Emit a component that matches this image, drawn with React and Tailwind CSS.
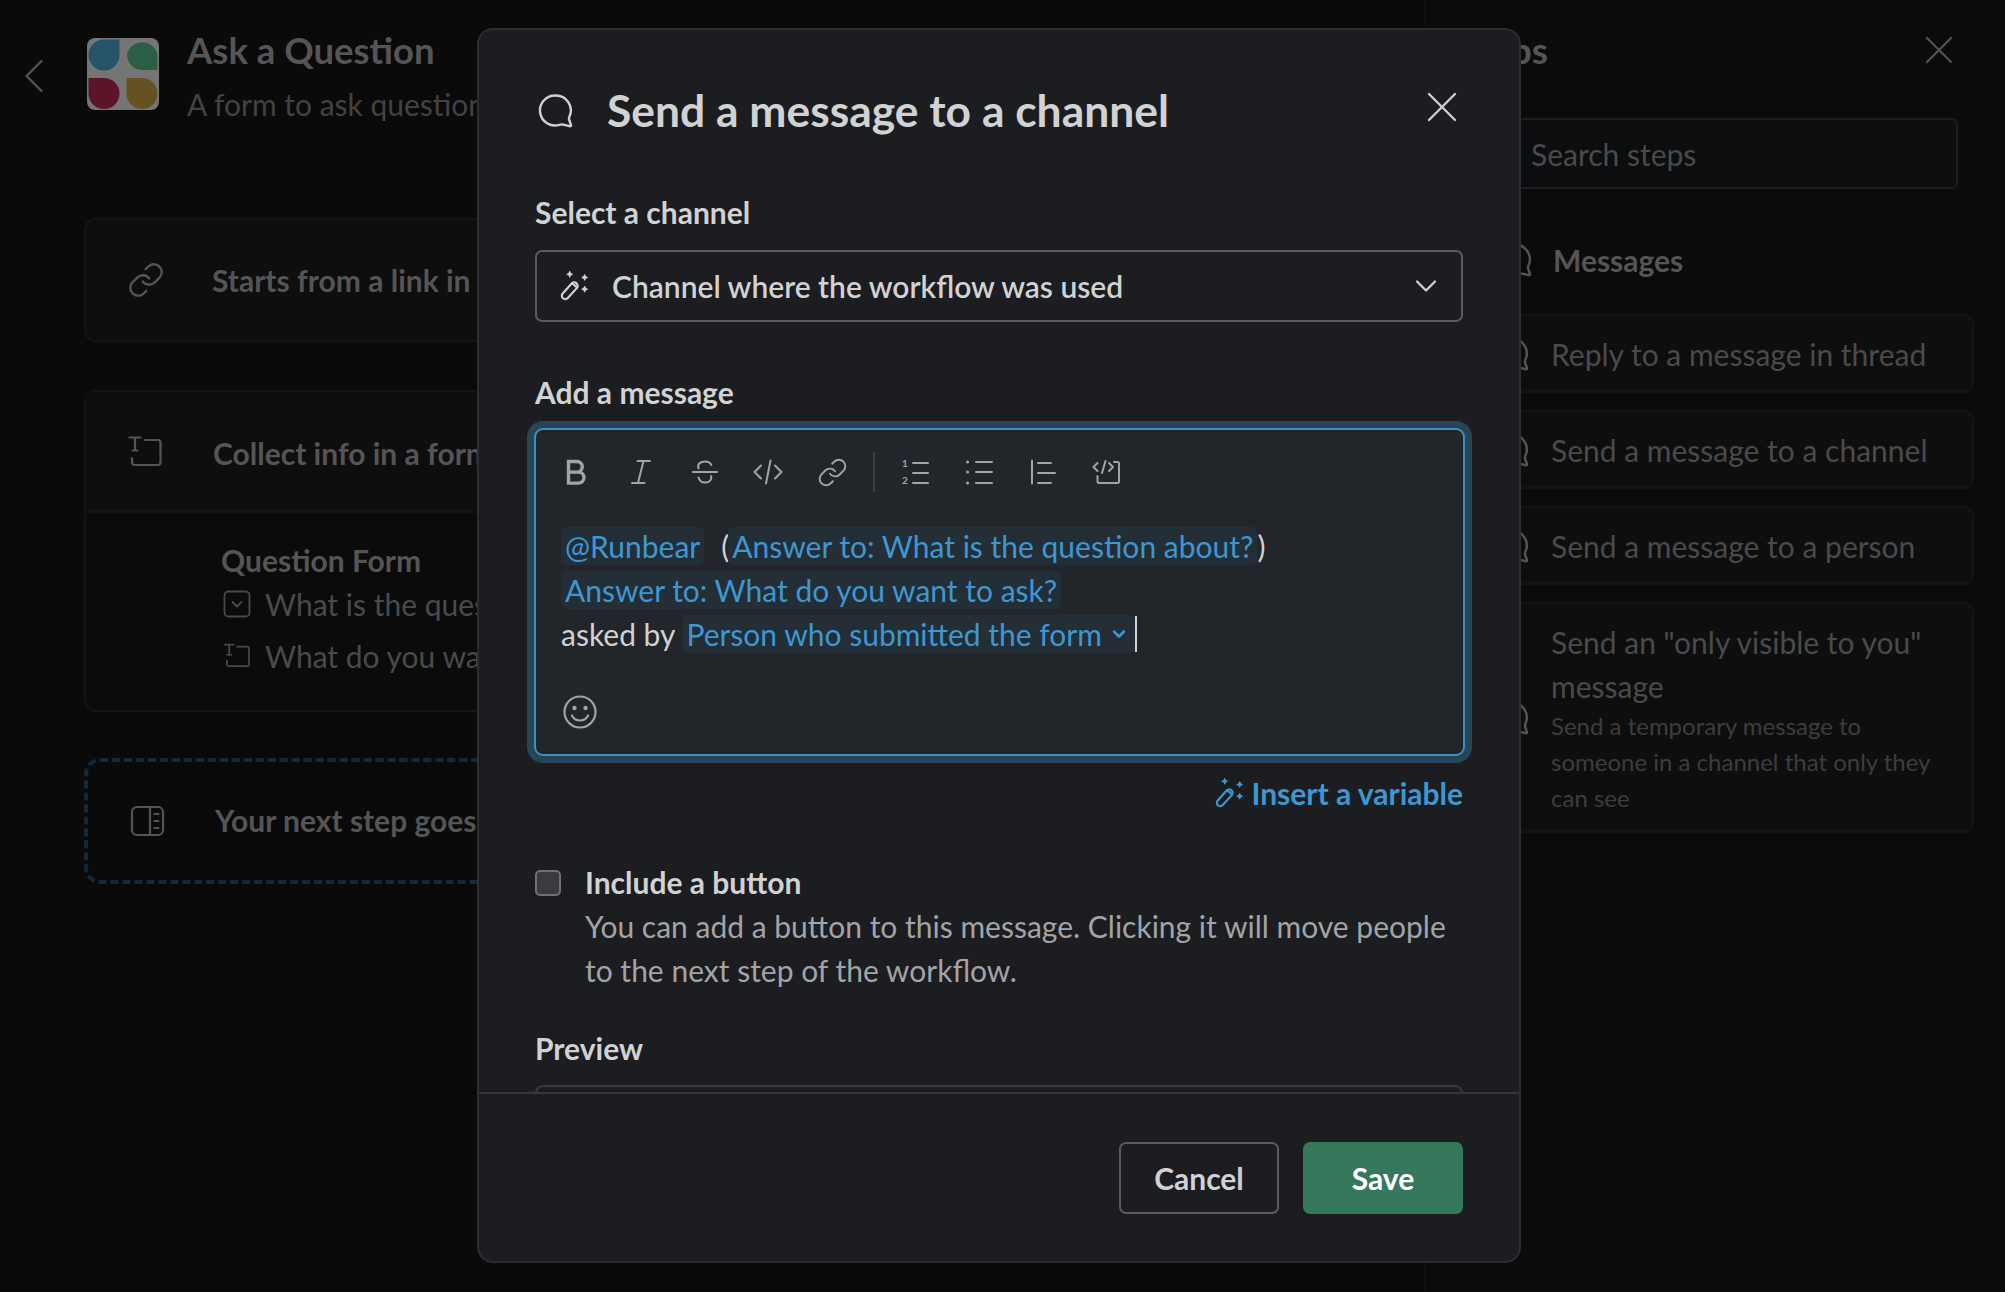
import { Link, X, ChevronLeft, ChevronDown } from 'lucide-react'

// ── Icons ────────────────────────────────────────────────────────────
const Svg = ({ size = 36, className = '', children, box = 36, strokeWidth = '2' }) => (
  <svg
    width={size}
    height={size}
    viewBox={`0 0 ${box} ${box}`}
    fill="none"
    stroke="currentColor"
    strokeLinecap="round"
    strokeLinejoin="round"
    strokeWidth={strokeWidth}
    className={`shrink-0 ${className}`}
  >
    {children}
  </svg>
)

const Bubble = ({ size = 36, className = '' }) => (
  <Svg size={size} className={className} strokeWidth="2.400">
    <path d="M17 2.500a15 15 0 1 0 4.500 29.300c1.200-.4 2.500-.5 3.700-.2l6.500 1.600c1 .2 1.500-.4 1.200-1.300l-1.800-5.400c-.3-.9-.2-1.700.2-2.500A15 15 0 0 0 17 2.500z" />
  </Svg>
)

const Wand = ({ size = 32, className = '' }) => (
  <Svg size={size} box={30} className={className} strokeWidth="2">
    <rect x="-9.500" y="-3.200" width="19" height="6.400" rx="3.200" transform="translate(11 19.500) rotate(-48)" />
    <path d="M13.500 12.500l4.500 4" />
    <path d="M11 1.500l.8 1.700 1.700.8-1.700.8-.8 1.700-.8-1.700-1.700-.8 1.700-.8z" fill="currentColor" strokeWidth="1" />
    <path d="M25 4.500l.8 1.700 1.700.8-1.700.8-.8 1.700-.8-1.700-1.700-.8 1.700-.8z" fill="currentColor" strokeWidth="1" />
    <path d="M25 15.500l.8 1.700 1.700.8-1.700.8-.8 1.700-.8-1.700-1.700-.8 1.700-.8z" fill="currentColor" strokeWidth="1" />
  </Svg>
)

const TextBox = ({ size = 36, className = '' }) => (
  <Svg size={size} className={className} strokeWidth="2.200">
    <path d="M18 6h13a2.500 2.500 0 0 1 2.500 2.500v20a2.500 2.500 0 0 1-2.500 2.500H7.500A2.500 2.500 0 0 1 5 28.500V24" />
    <path d="M2.500 3.500h11M8 3.500v13M5.500 16.500h5" />
  </Svg>
)

const SelectBox = ({ size = 28, className = '' }) => (
  <Svg size={size} box={28} className={className} strokeWidth="1.800">
    <rect x="1.500" y="1.500" width="25" height="25" rx="4" />
    <path d="M9.500 12l4.500 4.500 4.500-4.500" />
  </Svg>
)

const Panel = ({ className = '' }) => (
  <Svg size={36} className={className} strokeWidth="2.200">
    <rect x="2" y="4" width="31" height="28" rx="5" />
    <path d="M20 4v28M24.500 11h4M24.500 18h4M24.500 25h4" />
  </Svg>
)

const LogoTile = () => (
  <svg width="72" height="72" viewBox="0 0 72 72" className="shrink-0">
    <rect width="72" height="72" rx="8" fill="#757575" />
    <path d="M1.500 17A15.500 15.500 0 0 1 17 1.500H32.500V17A15.500 15.500 0 0 1 1.500 17z" fill="#27536a" />
    <path d="M40 17A15.500 15.500 0 0 1 70.500 17V32H55.500A15.500 15.500 0 0 1 40 17z" fill="#2a5f44" />
    <path d="M1.500 40H17a15.500 15.500 0 1 1-15.500 15.500z" fill="#5a1529" />
    <path d="M70.500 55.500a15.500 15.500 0 1 1-31 0V40h15.500a15.500 15.500 0 0 1 15.500 15.500z" fill="#645220" />
  </svg>
)

// ── Toolbar ──────────────────────────────────────────────────────────
const ToolBtn = ({ children }) => (
  <div className="flex h-[64px] w-[64px] items-center justify-center text-[#a3a4a6]">{children}</div>
)

const Toolbar = () => (
  <div className="flex items-center">
    <ToolBtn>
      <Svg>
        <path d="M10.500 7.500h8.500a5.300 5.300 0 0 1 0 10.600h-8.500zM10.500 18.100H20.500a5.500 5.500 0 0 1 0 11h-10z" strokeWidth="3.400" strokeLinecap="butt" strokeLinejoin="miter" />
      </Svg>
    </ToolBtn>
    <ToolBtn>
      <Svg>
        <path d="M15.500 7H28M10 29h12.500M21.500 7l-5.500 22" />
      </Svg>
    </ToolBtn>
    <ToolBtn>
      <Svg>
        <path d="M7 18h24" />
        <path d="M12.500 14.500C11 10 14.500 7.500 19 7.500c3 0 5.300 1 6.200 3.500" />
        <path d="M12.500 23.500c.8 3.200 3.300 5 6.500 5 3.600 0 6.300-2 6.300-5 0-.5-.1-1-.2-1.500" />
      </Svg>
    </ToolBtn>
    <ToolBtn>
      <Svg>
        <path d="M11 11.500L4.500 18l6.500 6.500M25 11.500l6.500 6.500-6.500 6.500M20.500 6.500l-4.500 23" />
      </Svg>
    </ToolBtn>
    <ToolBtn>
      <Link size={31} strokeWidth={1.500} />
    </ToolBtn>
    <div className="mr-[8px] ml-[9px] h-[40px] w-[2px] bg-[#3c3e42]" />
    <ToolBtn>
      <Svg>
        <path d="M16 9h15M16 19h15M16 29h15" />
        <text x="5" y="13" fontSize="10" fontWeight="700" fill="currentColor" stroke="none" fontFamily="Lato, sans-serif">1</text>
        <text x="5" y="30" fontSize="10" fontWeight="700" fill="currentColor" stroke="none" fontFamily="Lato, sans-serif">2</text>
      </Svg>
    </ToolBtn>
    <ToolBtn>
      <Svg>
        <path d="M15 8h16M15 18h16M15 29h16" />
        <path d="M6.500 8h.1M6.500 18h.1M6.500 29h.1" strokeWidth="3" />
      </Svg>
    </ToolBtn>
    <ToolBtn>
      <Svg>
        <path d="M7 6.500v23M13 9h13M13 19h17M13 29h13" />
      </Svg>
    </ToolBtn>
    <ToolBtn>
      <Svg>
        <path d="M25 8h3.500A1.500 1.500 0 0 1 30 9.500v18a1.500 1.500 0 0 1-1.500 1.500H10A1.500 1.500 0 0 1 8.500 27.500V22" />
        <path d="M8.500 9L4.500 13l4 4M20 9l4 4-4 4M16.500 7l-3.500 12" />
      </Svg>
    </ToolBtn>
  </div>
)

const Chip = ({ className = '', children }) => (
  <span className={`inline-flex h-[38px] items-center rounded-[5px] bg-[#232e37] px-[4px] text-[#3f97d1] ${className}`}>{children}</span>
)

// ── Background: workflow editor ──────────────────────────────────────
const WorkflowPane = () => (
  <div className="relative w-[1425px] shrink-0 overflow-hidden border-r border-[#111112] bg-[#0a0a0b]">
    <div className="flex h-[218px] items-start pt-[38px]">
      <div className="flex h-[72px] w-[87px] items-center pl-[4px] text-[#555556]">
        <ChevronLeft size={60} strokeWidth={0.900} className="translate-y-[2px]" />
      </div>
      <LogoTile />
      <div className="ml-[28px] -mt-[2px]">
        <div className="text-[36.500px] leading-[28px] font-bold text-[#555556]">Ask a Question</div>
        <div className="mt-[20px] text-[30px] leading-[40px] text-[#424243]">A form to ask questions</div>
      </div>
    </div>

    <div className="ml-[84px] w-[1200px]">
      <div className="flex h-[124px] items-center rounded-[12px] border-2 border-[#141415] bg-[#0e0e0f] pl-[41px] text-[#555556]">
        <Link size={38} strokeWidth={1.500} />
        <span className="ml-[47px] text-[30px] font-bold">Starts from a link in Slack</span>
      </div>

      <div className="mt-[48px] h-[322px] rounded-[12px] border-2 border-[#141415] bg-[#0b0b0c]">
        <div className="flex h-[121px] items-center border-b-2 border-[#141415] bg-[#0e0e0f] pl-[41px] text-[#555556]">
          <TextBox />
          <span className="ml-[50px] translate-y-[2px] text-[30px] font-bold">Collect info in a form</span>
        </div>
        <div className="pt-[27px] pl-[135px]">
          <div className="text-[30px] leading-[40px] font-bold text-[#555556]">Question Form</div>
          <div className="mt-[2px] flex h-[44px] items-center text-[30px] text-[#4a4a4b]">
            <SelectBox className="ml-[2px]" />
            <span className="ml-[14px]">What is the question about?</span>
          </div>
          <div className="mt-[8px] flex h-[44px] items-center text-[30px] text-[#4a4a4b]">
            <TextBox size={28} className="ml-[2px]" />
            <span className="ml-[14px]">What do you want to ask?</span>
          </div>
        </div>
      </div>

      <div className="mt-[46px] flex h-[126px] items-center rounded-[16px] border-[4px] border-dashed border-[#12293b] pl-[42px] text-[#555556]">
        <Panel />
        <span className="ml-[49px] -translate-y-[1px] text-[30px] font-bold">Your next step goes here</span>
      </div>
    </div>
  </div>
)

// ── Background: steps panel ──────────────────────────────────────────
const STEPS = ['Reply to a message in thread', 'Send a message to a channel', 'Send a message to a person']

const StepsPane = () => (
  <div className="relative min-w-0 flex-1 bg-[#0b0b0c] pr-[31px] pl-[33px]">
    <div className="flex h-[118px] items-start pt-[28px]">
      <span className="text-[37px] leading-[44px] font-bold text-[#555556]">Steps</span>
      <X size={48} strokeWidth={1.100} className="mt-[-2px] ml-auto mr-[11px] text-[#555556]" />
    </div>
    <div className="mr-[16px] flex h-[71px] items-center rounded-[6px] border-2 border-[#1c1d20] bg-[#0c0d0f] pt-[2px] pl-[71px] text-[30px] text-[#4a4a4b]">
      Search steps
    </div>
    <div className="mt-[51px] flex h-[40px] items-center text-[#555556]">
      <Bubble className="ml-[39px]" />
      <span className="ml-[20px] text-[30px] font-bold">Messages</span>
    </div>
    <div className="mt-[34px] flex flex-col gap-[17px]">
      {STEPS.map((s) => (
        <div key={s} className="flex h-[79px] items-center rounded-[10px] border-2 border-[#141415] bg-[#0e0e0f] text-[#555556]">
          <Bubble className="ml-[34px]" />
          <span className="ml-[21px] translate-y-[1px] text-[30px] text-[#4a4a4b]">{s}</span>
        </div>
      ))}
      <div className="flex h-[231px] items-center rounded-[10px] border-2 border-[#141415] bg-[#0e0e0f] text-[#555556]">
        <Bubble className="ml-[34px]" />
        <div className="ml-[21px] w-[400px]">
          <div className="text-[30px] leading-[44px] text-[#4a4a4b]">Send an "only visible to you" message</div>
          <div className="text-[24px] leading-[36px] text-[#3d3d3e]">Send a temporary message to someone in a channel that only they can see</div>
        </div>
      </div>
    </div>
  </div>
)

// ── Modal ────────────────────────────────────────────────────────────
const Modal = () => (
  <div className="absolute top-[28px] left-[477px] flex h-[1235px] w-[1044px] flex-col overflow-hidden rounded-[16px] border-2 border-[#2c2d31] bg-[#1b1d21]">
    <div className="h-[1062px] overflow-hidden px-[56px]">
      <div className="flex h-[115px] items-start pt-[62px] text-[#d1d2d3]">
        <Bubble className="ml-[3px] mt-[1px]" />
        <h1 className="ml-[33px] -mt-[6px] text-[44.400px] leading-[48px] font-bold">Send a message to a channel</h1>
        <X size={52} strokeWidth={1.100} className="-mt-[11px] ml-auto mr-[-5px]" />
      </div>

      <div className="mt-[49px] text-[30px] leading-[36px] font-bold text-[#d1d2d3]">Select a channel</div>
      <div className="mt-[20px] flex h-[72px] items-center rounded-[7px] border-2 border-[#5b5c5f] pr-[17px] pl-[21px] text-[#d1d2d3]">
        <Wand />
        <span className="ml-[22px] text-[30px] font-semibold">Channel where the workflow was used</span>
        <ChevronDown size={36} strokeWidth={1.500} className="ml-auto" />
      </div>

      <div className="mt-[52px] text-[30px] leading-[36px] font-bold text-[#d1d2d3]">Add a message</div>

      <div className="mt-[18px] -mr-[2px] -ml-[1px] h-[328px] rounded-[9px] border-2 border-[#3f8fc6] bg-[#222529] shadow-[0_0_0_7px_#284558]">
        <div className="mt-[10px] ml-[8px]">
          <Toolbar />
        </div>
        <div className="mt-[20px] ml-[25px] text-[30px] leading-[44px] text-[#d1d2d3]">
          <div className="flex h-[44px] items-center">
            <Chip>@Runbear</Chip>
            <span className="ml-[17px]">(</span>
            <Chip className="ml-[-1px]">Answer to: What is the question about?</Chip>
            <span>)</span>
          </div>
          <div className="flex h-[44px] items-center">
            <Chip>Answer to: What do you want to ask?</Chip>
          </div>
          <div className="flex h-[44px] items-center">
            <span>asked by</span>
            <Chip className="ml-[7px] pr-[6px]">
              Person who submitted the form
              <ChevronDown size={20} strokeWidth={3} className="ml-[7px]" />
            </Chip>
            <span className="h-[36px] w-[2px] bg-[#d1d2d3]" />
          </div>
        </div>
        <svg width="36" height="36" viewBox="0 0 36 36" fill="none" stroke="#a3a4a6" strokeWidth="2.200" strokeLinecap="round" className="mt-[38px] ml-[26px]">
          <circle cx="18" cy="18" r="15.500" />
          <circle cx="12.500" cy="14" r="2.200" fill="#a3a4a6" stroke="none" />
          <circle cx="23.500" cy="14" r="2.200" fill="#a3a4a6" stroke="none" />
          <path d="M10 21.500c1.500 3.500 4.500 5 8 5s6.500-1.500 8-5" />
        </svg>
      </div>

      <div className="mt-[15px] flex items-center justify-end text-[#3f97d1]">
        <Wand />
        <span className="ml-[7px] text-[30px] leading-[44px] font-bold">Insert a variable</span>
      </div>

      <div className="mt-[51px] flex items-start">
        <div className="mt-[4px] h-[26px] w-[26px] rounded-[5px] border-2 border-[#6f7072] bg-[#3a3b3e]" />
        <div className="ml-[24px] min-w-0 flex-1">
          <div className="text-[30px] leading-[32px] font-bold text-[#d1d2d3]">Include a button</div>
          <div className="mt-[6px] text-[30px] leading-[44px] text-[#a3a4a6]">
            You can add a button to this message. Clicking it will move people to the next step of the workflow.
          </div>
        </div>
      </div>

      <div className="mt-[38px] text-[30px] leading-[36px] font-bold text-[#d1d2d3]">Preview</div>
      <div className="mt-[19px] h-[40px] rounded-t-[8px] border-2 border-[#3a3b3e]" />
    </div>

    <div className="flex flex-1 justify-end gap-[24px] border-t-2 border-[#36373b] pt-[48px] pr-[56px]">
      <button className="h-[72px] w-[160px] rounded-[7px] border-2 border-[#5b5c5f] text-[30px] font-bold text-[#d1d2d3]">Cancel</button>
      <button className="h-[72px] w-[160px] rounded-[7px] bg-[#35785c] text-[30px] font-bold text-white">Save</button>
    </div>
  </div>
)

export default function App() {
  return (
    <div className="relative flex h-[1292px] w-[2005px] overflow-hidden bg-[#0a0a0b] [font-family:Lato,sans-serif]">
      <WorkflowPane />
      <StepsPane />
      <Modal />
    </div>
  )
}
